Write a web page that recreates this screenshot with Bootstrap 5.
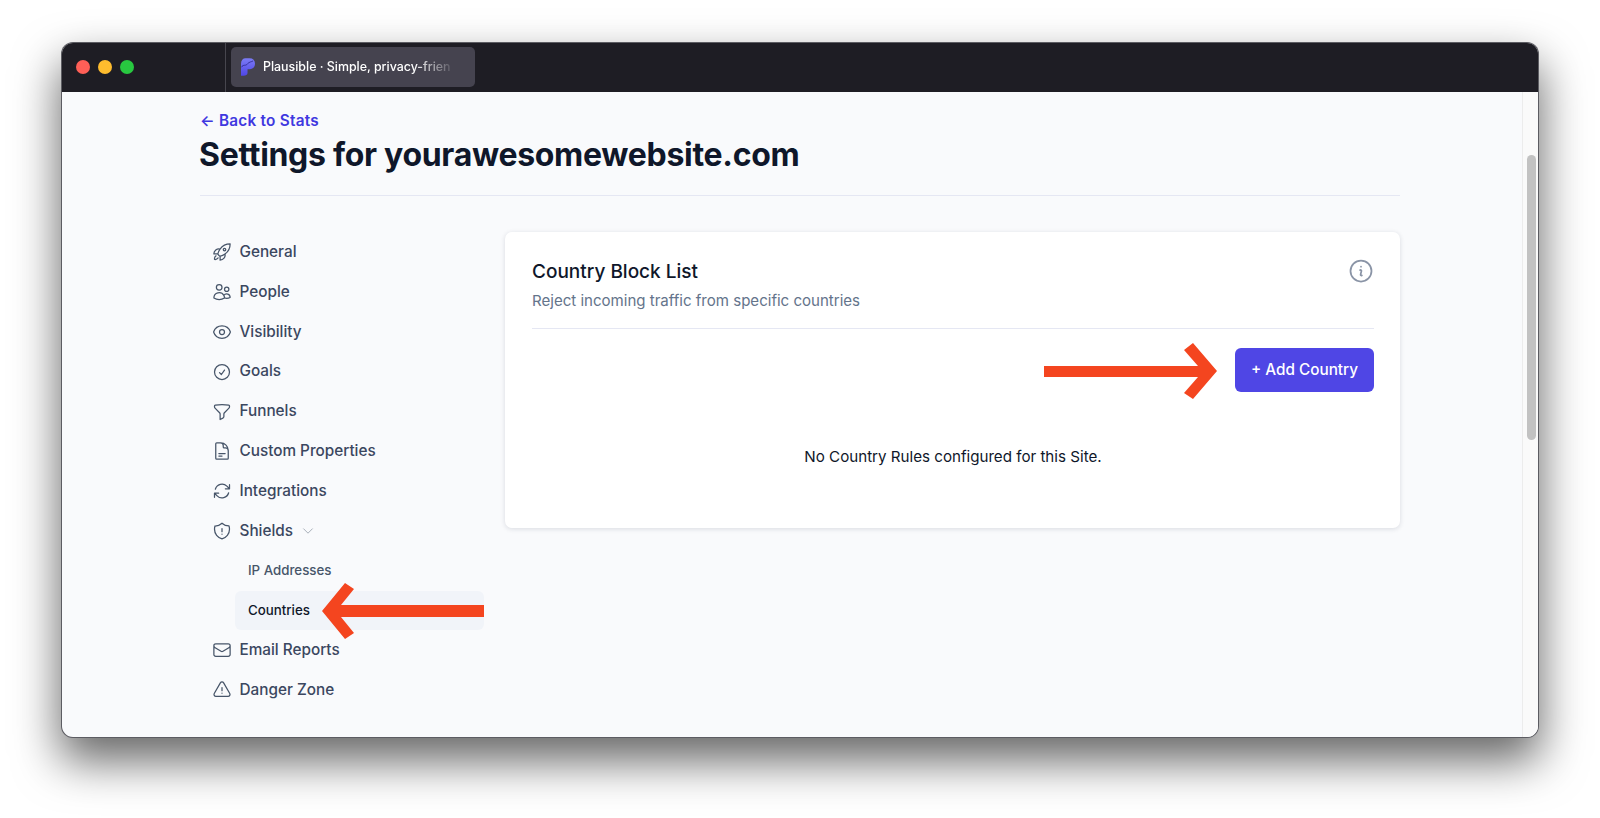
<!doctype html>
<html lang="en">
<head>
<meta charset="utf-8">
<title>Plausible settings</title>
<link href="https://cdn.jsdelivr.net/npm/bootstrap@5.3.0/dist/css/bootstrap.min.css" rel="stylesheet">
<style>
html,body{height:818px;overflow:hidden;background:#fff;font-family:Inter,"Liberation Sans",sans-serif}
.stage{padding:43px 62px 80px 62px;height:818px;position:relative}
.appwin{width:1476px;height:694px;border-radius:11px;overflow:hidden;box-shadow:0 0 0 1px #5c5c62,0 22px 46px 2px rgba(0,0,0,.6);background:#f9fafc}
.chrome{height:49px;background:#1e1d24;padding:0 0 2px 14px}
.dot{width:14px;height:14px;border-radius:50%}
.dot-r{background:#fe5f57}.dot-y{background:#febc2e}.dot-g{background:#28c840}
.chrome-sep{width:1px;align-self:stretch;background:#47464e;margin:0 5px -2px 91px}
.tabbox{width:244px;height:40px;background:#45434f;border-radius:5px;padding-left:10px;gap:8px}
.tabtitle{display:inline-block;white-space:nowrap;color:#fff;font-size:12.4px;font-weight:500;padding-top:1px;-webkit-mask-image:linear-gradient(90deg,#000 80%,rgba(0,0,0,.12) 100%);mask-image:linear-gradient(90deg,#000 80%,rgba(0,0,0,.12) 100%)}
.pagearea{height:645px}
.pagecontent{padding:18px 0 0 138px;flex:1 1 auto;min-width:0}
.backlink{color:#3f38e0;font-size:15.3px;font-weight:600;line-height:22px;text-decoration:none;display:block;letter-spacing:.25px}
.pagetitle{color:#0f172a;font-size:32px;font-weight:700;line-height:42px;margin:2px 0 19px -1px;letter-spacing:-.3px}
.headrule{height:1px;background:#e5e7f3;width:1200px;margin-bottom:36px}
.layoutrow{width:1200px}
.sidenav{width:305px;flex:none;padding:.5px 21px 0 0}
.sideitem{height:39.8px;color:#3b4760;font-size:15.3px;font-weight:500;padding-left:11.5px;gap:8px;white-space:nowrap}
.sideitem svg{width:20px;height:20px;flex:none;fill:none;stroke:#475569;stroke-width:1.5;stroke-linecap:round;stroke-linejoin:round}
.sideitem .chev{width:14px;height:14px;stroke:#9ca3af}
.subitem{height:39.8px;margin-left:35px;padding-left:13px;font-size:13.3px;font-weight:500;color:#475569;border-radius:6px}
.subitem-on{background:#f1f4f9;color:#0f172a}
.panel{width:895px;height:296px;background:#fff;border-radius:7px;box-shadow:0 1px 5px rgba(20,30,60,.14);padding:27px 26px 0 27px}
.paneltitle{color:#0f172a;font-size:19px;font-weight:500;line-height:26px}
.panelsub{color:#64748b;font-size:15.05px;line-height:22px;margin-top:5px}
.inforing{width:28px;height:28px;margin:-2px -1px 0 0;fill:none;stroke:#8a94a6;stroke-width:1.5;stroke-linecap:round;stroke-linejoin:round;flex:none}
.panelrule{height:1px;background:#e5e7f3;margin-top:16px;margin-bottom:19px}
.addbtn{width:139px;height:44px;background:#4f46e5;color:#fff;border:0;border-radius:6px;font-size:15.3px;font-weight:500;padding:0}
.addbtn:hover{background:#4f46e5;color:#fff}
.emptymsg{color:#0f172a;font-size:15.15px;line-height:22px;margin-top:54px;text-align:center}
.scrolltrack{width:16px;height:645px;background:#fafafa;border-left:1px solid #ececec;flex:none;padding:63px 2px 0 4px}
.scrollthumb{height:285px;background:#c2c2c2;border-radius:5px}
.arrowlayer{position:absolute;left:0;top:0;width:1600px;height:818px;pointer-events:none}
</style>
</head>
<body>
<div class="stage">
  <div class="appwin">
    <div class="chrome d-flex align-items-center">
      <div class="d-flex gap-2"><span class="dot dot-r"></span><span class="dot dot-y"></span><span class="dot dot-g"></span></div>
      <span class="chrome-sep"></span>
      <div class="tabbox d-flex align-items-center">
        <svg width="14" height="18" viewBox="0 0 15 19" aria-hidden="true"><defs><linearGradient id="lg" x1="0" y1="0" x2="0" y2="1"><stop offset="0" stop-color="#7c7cf5"/><stop offset="1" stop-color="#4f46e5"/></linearGradient></defs><path d="M0 6 C0 2 2 0 5 0 H9 C13 0 15 2 15 6 C15 10 12 12 8 12 H7 V16 C7 18 5 19 3 19 H0 Z" fill="url(#lg)"/><path d="M0 10 C3 6 5 9 7 6 C9 4 11 4 13 3" stroke="#2d2a8f" stroke-width=".9" fill="none"/></svg>
        <span class="tabtitle">Plausible · Simple, privacy-frien</span>
      </div>
    </div>
    <div class="pagearea d-flex">
      <div class="pagecontent">
        <a class="backlink" href="#">← Back to Stats</a>
        <h1 class="pagetitle">Settings for yourawesomewebsite.com</h1>
        <div class="headrule"></div>
        <div class="layoutrow d-flex">
          <nav class="sidenav">
            <div class="sideitem d-flex align-items-center"><svg viewBox="0 0 24 24"><path d="M15.59 14.37a6 6 0 0 1-5.84 7.38v-4.8m5.84-2.58a14.98 14.98 0 0 0 6.16-12.12A14.98 14.98 0 0 0 9.631 8.41m5.96 5.96a14.926 14.926 0 0 1-5.841 2.58m-.119-8.54a6 6 0 0 0-7.381 5.84h4.8m2.581-5.84a14.927 14.927 0 0 0-2.58 5.84m2.699 2.7c-.103.021-.207.041-.311.06a15.09 15.09 0 0 1-2.448-2.448 14.9 14.9 0 0 1 .06-.312m-2.24 2.39a4.493 4.493 0 0 0-1.757 4.306 4.493 4.493 0 0 0 4.306-1.758M16.5 9a1.5 1.5 0 1 1-3 0 1.5 1.5 0 0 1 3 0Z"/></svg>General</div>
            <div class="sideitem d-flex align-items-center"><svg viewBox="0 0 24 24"><path d="M15 19.128a9.38 9.38 0 0 0 2.625.372 9.337 9.337 0 0 0 4.121-.952 4.125 4.125 0 0 0-7.533-2.493M15 19.128v-.003c0-1.113-.285-2.16-.786-3.07M15 19.128v.106A12.318 12.318 0 0 1 8.624 21c-2.331 0-4.512-.645-6.374-1.766l-.001-.109a6.375 6.375 0 0 1 11.964-3.07M12 6.375a3.375 3.375 0 1 1-6.75 0 3.375 3.375 0 0 1 6.75 0Zm8.25 2.25a2.625 2.625 0 1 1-5.25 0 2.625 2.625 0 0 1 5.25 0Z"/></svg>People</div>
            <div class="sideitem d-flex align-items-center"><svg viewBox="0 0 24 24"><path d="M2.036 12.322a1.012 1.012 0 0 1 0-.639C3.423 7.51 7.36 4.5 12 4.5c4.638 0 8.573 3.007 9.963 7.178.07.207.07.431 0 .639C20.577 16.49 16.64 19.5 12 19.5c-4.638 0-8.573-3.007-9.963-7.178Z"/><path d="M15 12a3 3 0 1 1-6 0 3 3 0 0 1 6 0Z"/></svg>Visibility</div>
            <div class="sideitem d-flex align-items-center"><svg viewBox="0 0 24 24"><path d="M9 12.75 11.25 15 15 9.75M21 12a9 9 0 1 1-18 0 9 9 0 0 1 18 0Z"/></svg>Goals</div>
            <div class="sideitem d-flex align-items-center"><svg viewBox="0 0 24 24"><path d="M12 3c2.755 0 5.455.232 8.083.678.533.09.917.556.917 1.096v1.044a2.25 2.25 0 0 1-.659 1.591l-5.432 5.432a2.25 2.25 0 0 0-.659 1.591v2.927a2.25 2.25 0 0 1-1.244 2.013L9.75 21v-6.568a2.25 2.25 0 0 0-.659-1.591L3.659 7.409A2.25 2.25 0 0 1 3 5.818V4.774c0-.54.384-1.006.917-1.096A48.32 48.32 0 0 1 12 3Z"/></svg>Funnels</div>
            <div class="sideitem d-flex align-items-center"><svg viewBox="0 0 24 24"><path d="M19.5 14.25v-2.625a3.375 3.375 0 0 0-3.375-3.375h-1.5A1.125 1.125 0 0 1 13.5 7.125v-1.5a3.375 3.375 0 0 0-3.375-3.375H8.25m0 12.75h7.5m-7.5 3H12M10.5 2.25H5.625c-.621 0-1.125.504-1.125 1.125v17.25c0 .621.504 1.125 1.125 1.125h12.75c.621 0 1.125-.504 1.125-1.125V11.25a9 9 0 0 0-9-9Z"/></svg>Custom Properties</div>
            <div class="sideitem d-flex align-items-center"><svg viewBox="0 0 24 24"><path d="M16.023 9.348h4.992v-.001M2.985 19.644v-4.992m0 0h4.992m-4.993 0 3.181 3.183a8.25 8.25 0 0 0 13.803-3.7M4.031 9.865a8.25 8.25 0 0 1 13.803-3.7l3.181 3.182m0-4.991v4.99"/></svg>Integrations</div>
            <div class="sideitem d-flex align-items-center"><svg viewBox="0 0 24 24"><path d="M12 9v3.75m0-10.036A11.959 11.959 0 0 1 3.598 6 11.99 11.99 0 0 0 3 9.75c0 5.592 3.824 10.29 9 11.622 5.176-1.332 9-6.03 9-11.622 0-1.31-.21-2.571-.598-3.751h-.152c-3.196 0-6.1-1.25-8.25-3.286Zm0 13.036h.008v.008H12v-.008Z"/></svg>Shields<svg class="chev" viewBox="0 0 24 24"><path d="m19.5 8.25-7.5 7.5-7.5-7.5"/></svg></div>
            <div class="subitem d-flex align-items-center">IP Addresses</div>
            <div class="subitem subitem-on d-flex align-items-center">Countries</div>
            <div class="sideitem d-flex align-items-center"><svg viewBox="0 0 24 24"><path d="M21.75 6.75v10.5a2.25 2.25 0 0 1-2.25 2.25h-15a2.25 2.25 0 0 1-2.25-2.25V6.75m19.5 0A2.25 2.25 0 0 0 19.5 4.5h-15a2.25 2.25 0 0 0-2.25 2.25m19.5 0v.243a2.25 2.25 0 0 1-1.07 1.916l-7.5 4.615a2.25 2.25 0 0 1-2.36 0L3.32 8.91a2.25 2.25 0 0 1-1.07-1.916V6.75"/></svg>Email Reports</div>
            <div class="sideitem d-flex align-items-center"><svg viewBox="0 0 24 24"><path d="M12 9v3.75m-9.303 3.376c-.866 1.5.217 3.374 1.948 3.374h14.71c1.73 0 2.813-1.874 1.948-3.374L13.949 3.378c-.866-1.5-3.032-1.5-3.898 0L2.697 16.126ZM12 15.75h.007v.008H12v-.008Z"/></svg>Danger Zone</div>
          </nav>
          <section class="panel">
            <div class="d-flex justify-content-between align-items-start">
              <div>
                <div class="paneltitle">Country Block List</div>
                <div class="panelsub">Reject incoming traffic from specific countries</div>
              </div>
              <svg class="inforing" viewBox="0 0 24 24"><path d="m11.25 11.25.041-.02a.75.75 0 0 1 1.063.852l-.708 2.836a.75.75 0 0 0 1.063.853l.041-.021M21 12a9 9 0 1 1-18 0 9 9 0 0 1 18 0Zm-9-3.75h.008v.008H12V8.25Z"/></svg>
            </div>
            <div class="panelrule"></div>
            <div class="d-flex justify-content-end"><button class="btn addbtn" type="button">+ Add Country</button></div>
            <p class="emptymsg mb-0">No Country Rules configured for this Site.</p>
          </section>
        </div>
      </div>
      <div class="scrolltrack"><div class="scrollthumb"></div></div>
    </div>
  </div>
  <svg class="arrowlayer" viewBox="0 0 1600 818" aria-hidden="true">
    <polygon fill="#f4451f" points="1044,366 1198,366 1184,350 1193,343 1217,371 1193,399 1184,393 1198,377 1044,377"/>
    <polygon fill="#f4451f" points="484,605 341,605 354,589 345,583 322,611 345,639 354,633 341,617 484,617"/>
  </svg>
</div>
</body>
</html>
